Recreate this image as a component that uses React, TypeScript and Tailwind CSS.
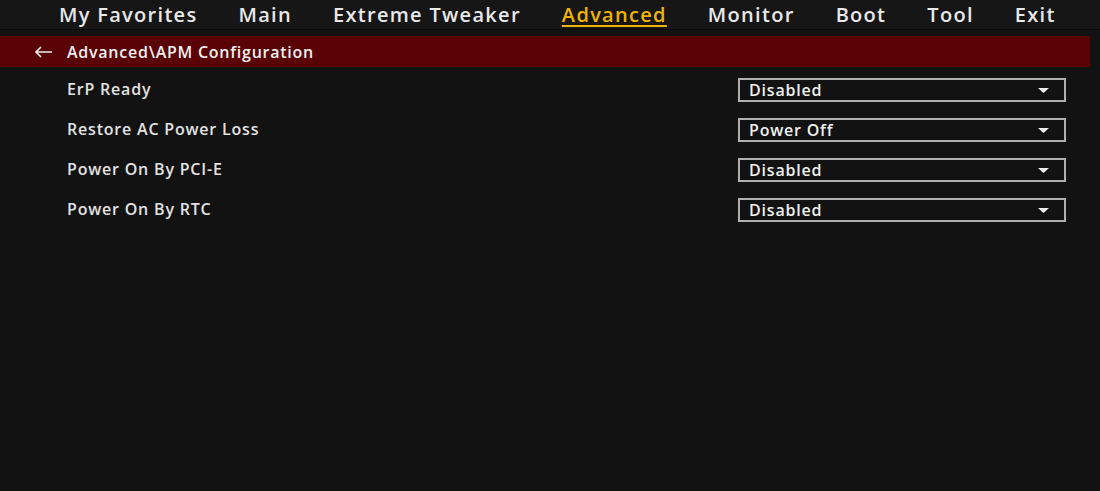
import React from 'react';

const tabs = ['My Favorites', 'Main', 'Extreme Tweaker', 'Advanced', 'Monitor', 'Boot', 'Tool', 'Exit'];

const items = [
  { label: 'ErP Ready', value: 'Disabled' },
  { label: 'Restore AC Power Loss', value: 'Power Off' },
  { label: 'Power On By PCI-E', value: 'Disabled' },
  { label: 'Power On By RTC', value: 'Disabled' },
];

const App = () => {
  return (
    <div className="w-[1100px] h-[491px] bg-[#121212] text-[#e6e6e6] overflow-hidden" style={{ fontFamily: '"Open Sans", "Noto Sans", sans-serif' }}>
      <div className="h-[30px] bg-[#161616] border-b border-[#0a0a0a] flex items-center pl-[59px] gap-[41px] text-[20px] font-semibold tracking-[1.3px]">
        {tabs.map((t) => (
          <span
            key={t}
            className={t === 'Advanced' ? 'text-[#f0b400] underline decoration-2 underline-offset-[3px]' : 'text-[#e8e8e8]'}
          >
            {t}
          </span>
        ))}
      </div>
      <div className="mt-[6px] w-[1090px] h-[31px] bg-[#5a0306] flex items-center pl-[34px] text-[16px] font-semibold tracking-[0.75px] text-[#f0f0f0]">
        <svg width="19" height="12" viewBox="0 0 19 12" className="mr-[14px]">
          <path d="M18 6H2M7 1L2 6l5 5" stroke="#f0f0f0" strokeWidth="1.6" fill="none" />
        </svg>
        <span>Advanced\APM Configuration</span>
      </div>
      <div className="pt-[3px]">
        {items.map((it) => (
          <div key={it.label} className="h-[40px] flex items-center pl-[67px]">
            <span className="w-[671px] text-[16px] font-semibold tracking-[0.8px] text-[#e2e2e2] -mt-[2px]">{it.label}</span>
            <div className="w-[328px] h-[24px] border-2 border-[#b0b0b0] flex items-center justify-between pl-[9px] pr-[15px] text-[16px] font-semibold tracking-[0.8px] text-[#f0f0f0]">
              <span>{it.value}</span>
              <svg width="11" height="5" viewBox="0 0 11 5">
                <path d="M0 0h11L5.5 5z" fill="#f0f0f0" />
              </svg>
            </div>
          </div>
        ))}
      </div>
    </div>
  );
};

export default App;
